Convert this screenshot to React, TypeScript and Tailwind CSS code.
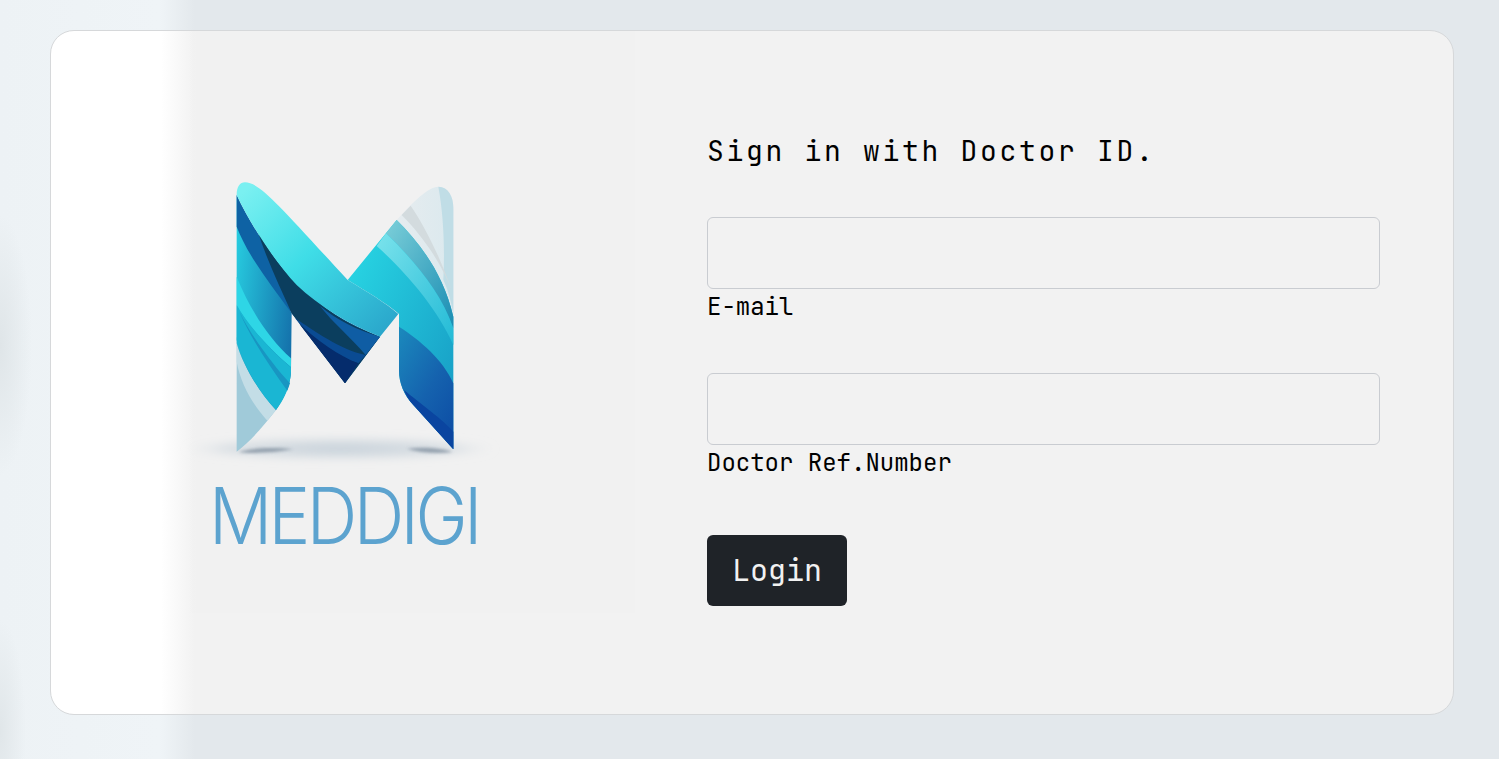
import React from "react";

const mono = "font-['JetBrains_Mono','DejaVu_Sans_Mono','Liberation_Mono',monospace]";

const MLogo: React.FC = () => (
  <svg width="320" height="300" viewBox="0 0 960 900" className="block">
    <defs>
      <radialGradient id="shadow" cx="50%" cy="50%" r="50%">
        <stop offset="0%" stopColor="#b8c6d2" stopOpacity="0.75" />
        <stop offset="75%" stopColor="#c4cfd8" stopOpacity="0.5" />
        <stop offset="100%" stopColor="#dfe4e8" stopOpacity="0" />
      </radialGradient>
      <filter id="soft" x="-20%" y="-200%" width="140%" height="500%">
        <feGaussianBlur stdDeviation="4" />
      </filter>
      <filter id="softer" x="-20%" y="-200%" width="140%" height="500%">
        <feGaussianBlur stdDeviation="12" />
      </filter>
      <linearGradient id="ribbon" x1="0.05" y1="0.05" x2="0.95" y2="0.95">
        <stop offset="0%" stopColor="#7af0f1" />
        <stop offset="45%" stopColor="#3fdde7" />
        <stop offset="100%" stopColor="#2aa6cb" />
      </linearGradient>
      <linearGradient id="legLeft" x1="0" y1="0.2" x2="1" y2="0.7">
        <stop offset="0%" stopColor="#27cbdf" />
        <stop offset="100%" stopColor="#1471ab" />
      </linearGradient>
      <linearGradient id="tealStrip" x1="0" y1="0" x2="1" y2="1">
        <stop offset="0%" stopColor="#7ccfd9" />
        <stop offset="100%" stopColor="#1a8db3" />
      </linearGradient>
      <linearGradient id="lightBand" x1="0" y1="0" x2="1" y2="1">
        <stop offset="0%" stopColor="#7be3ec" />
        <stop offset="100%" stopColor="#22bad6" />
      </linearGradient>
      <linearGradient id="cyan" x1="0" y1="0" x2="1" y2="1">
        <stop offset="0%" stopColor="#2adbe6" />
        <stop offset="100%" stopColor="#1597c2" />
      </linearGradient>
      <linearGradient id="blue" x1="0" y1="0" x2="0.7" y2="1">
        <stop offset="0%" stopColor="#1b8abd" />
        <stop offset="60%" stopColor="#1562ae" />
        <stop offset="100%" stopColor="#0e50a6" />
      </linearGradient>
      <linearGradient id="pale" x1="0" y1="0" x2="1" y2="0">
        <stop offset="0%" stopColor="#e6ecef" />
        <stop offset="100%" stopColor="#dbe9ee" />
      </linearGradient>
    </defs>

    <ellipse cx="480" cy="836" rx="470" ry="34" fill="url(#shadow)" filter="url(#softer)" />
    <path d="M175 846 C220 832 290 832 340 838 C280 848 220 852 175 846Z" fill="#7f8e9e" opacity="0.75" filter="url(#soft)" />
    <path d="M680 836 C740 830 790 836 818 846 C770 852 720 848 680 836Z" fill="#7f8e9e" opacity="0.75" filter="url(#soft)" />

    {/* left leg */}
    <path d="M170 500 C190 590 240 670 288 720 C245 775 210 815 170 845Z" fill="#a0cad9" />
    <path d="M170 520 C190 590 240 670 288 720 L262 752 C215 700 182 640 170 575Z" fill="#c3dde6" />
    <path d="M170 75 L170 520 C190 590 240 670 288 720 C315 680 333 640 333 600 L335 430 C280 330 210 210 170 75Z" fill="url(#legLeft)" />
    <path d="M170 320 C210 420 270 510 333 565 L333 592 C260 530 200 460 170 405Z" fill="#2ed6e6" />
    <path d="M170 405 C200 460 260 530 333 592 L333 605 C331 650 312 688 288 720 C240 670 190 590 170 510Z" fill="#1ab6d3" />
    <path d="M178 425 C215 510 270 590 322 662 L330 640 C280 585 215 500 178 425Z" fill="#1896c2" />

    {/* right leg */}
    <path d="M650 150 C700 95 745 50 775 50 C805 50 820 80 820 115 L820 440 C790 310 720 220 650 150Z" fill="url(#pale)" />
    <path d="M775 50 C805 50 820 80 820 115 L820 430 C810 380 800 350 790 330 C795 230 790 130 775 50Z" fill="#c0dde6" />
    <path d="M692 107 L665 135 C720 190 780 270 815 360 C780 260 735 170 692 107Z" fill="#d3dbde" />
    <path d="M503 330 L650 150 C720 220 790 310 820 440 L820 838 L700 705 C672 675 657 640 657 600 L657 432 C620 400 560 365 503 330Z" fill="url(#cyan)" />
    <path d="M650 150 L618 190 C700 270 780 360 820 475 L820 440 C790 310 720 220 650 150Z" fill="url(#tealStrip)" />
    <path d="M618 190 L590 228 C670 300 770 410 820 525 L820 475 C780 360 700 270 618 190Z" fill="url(#lightBand)" />
    <path d="M657 470 C720 510 790 570 820 640 L820 838 L700 705 C672 675 657 640 657 600Z" fill="url(#blue)" />
    <path d="M672 660 C720 700 790 750 820 785 L820 838 L700 705 C686 690 678 675 672 660Z" fill="#0a45a0" />

    {/* dark fold under the ribbon */}
    <path d="M170 75 C210 160 280 270 350 345 C420 410 500 460 600 500 L495 640 L335 430 C270 340 205 260 170 170Z" fill="#0e62a4" />
    <path d="M232 180 C280 270 340 340 420 400 C480 450 540 478 600 500 L495 640 L335 430 C300 350 260 270 232 180Z" fill="#0b3e5e" />
    <path d="M420 408 C470 450 530 480 600 500 L557 555 C510 500 460 460 420 408Z" fill="#0f5da4" />
    <path d="M345 445 C400 480 480 540 557 555 L535 580 C470 560 400 510 345 445Z" fill="#0a4b93" />
    <path d="M358 462 C410 510 480 560 535 580 L495 640Z" fill="#052c6c" />

    {/* ribbon */}
    <path d="M170 75 C170 50 180 37 195 37 C240 37 300 110 503 330 C560 365 620 400 655 432 L600 500 C500 460 420 410 350 345 C280 270 210 160 170 75Z" fill="url(#ribbon)" />
  </svg>
);

const Field: React.FC<{ label: string; className?: string }> = ({ label, className }) => (
  <div className={className}>
    <input
      type="text"
      aria-label={label}
      className="block h-[72px] w-[673px] rounded-md border border-[#c9ccd1] bg-transparent px-3 outline-none"
    />
    <label className={`${mono} block h-[34px] text-[24px] leading-[36px] text-black`}>{label}</label>
  </div>
);

export default function App() {
  return (
    <div className="h-screen overflow-hidden bg-[radial-gradient(ellipse_32px_130px_at_0px_345px,#dfe5e8,transparent),radial-gradient(ellipse_26px_110px_at_0px_730px,#e0e6e9,transparent),linear-gradient(90deg,#edf2f5_0px,#eff4f7_160px,#e3e8ec_195px)] pb-[44px] pl-[50px] pr-[45px] pt-[30px]">
      <div className="flex h-[685px] w-[1404px] rounded-3xl border border-[#d6d8da] bg-[linear-gradient(90deg,#ffffff_110px,#f2f2f2_144px)]">
        <div className="h-[582px] w-[584px] bg-[linear-gradient(90deg,transparent_138px,#f1f1f1_146px)] pl-[129px] pt-[139px]">
          <MLogo />
          <div className="ml-[29px] mt-[13px] h-[66px] origin-left scale-x-[0.9] whitespace-nowrap font-['Inter','Lato',sans-serif] text-[78px] font-light leading-[66px] tracking-[-4px] text-[#5ca3cf]">
            MEDDIGI
          </div>
        </div>
        <div className="flex-1 pl-[72px] pt-[99px]">
          <h1 className={`${mono} h-[42px] text-[28px] font-normal leading-[42px] tracking-[2.7px] text-black`}>
            Sign in with Doctor ID.
          </h1>
          <Field label="E-mail" className="mt-[45px]" />
          <Field label="Doctor Ref.Number" className="mt-[50px]" />
          <button className={`${mono} mt-[56px] block h-[71px] w-[140px] rounded-md bg-[#1f2328] text-[30px] text-[#f1f1f1]`}>
            Login
          </button>
        </div>
      </div>
    </div>
  );
}
